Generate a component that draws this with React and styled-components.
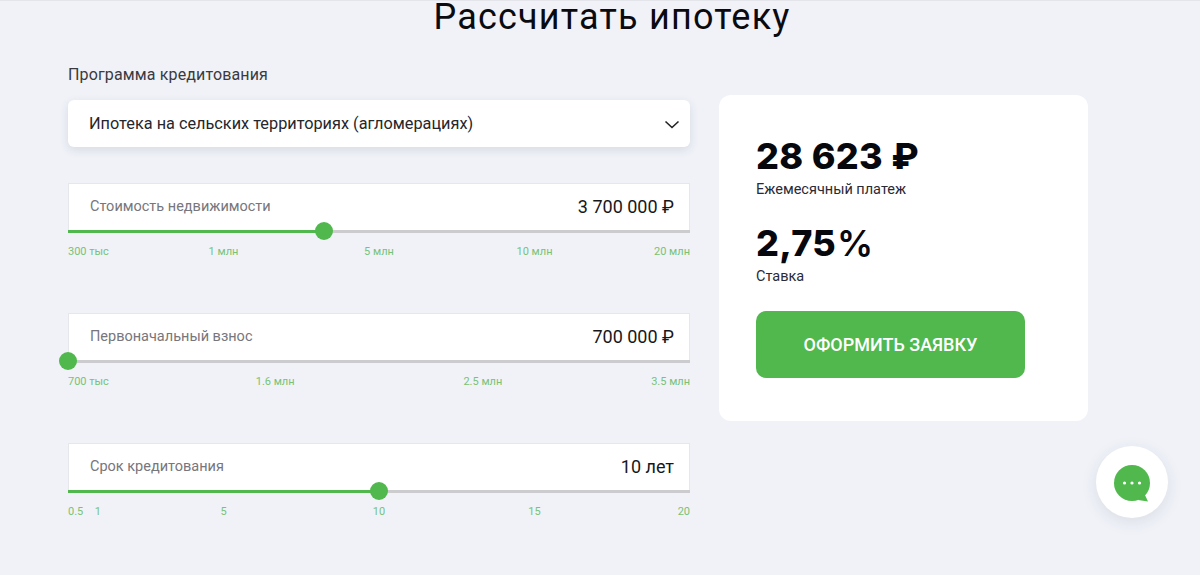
import React from 'react'
import styled, { createGlobalStyle } from 'styled-components'

const GlobalStyle = createGlobalStyle`
  html, body { margin: 0; padding: 0; height: 100%; overflow: hidden; }
  body { background: #f0f2f8; font-family: Roboto, "Noto Sans", sans-serif; }
`

const GREEN = '#50b84c'

const Page = styled.div`
  height: 575px;
  box-sizing: border-box;
  border-top: 1px solid #e3e5ea;
  position: relative;
`
const Title = styled.h1`
  margin: 0;
  height: 66px;
  padding-left: 24px;
  font: 400 36px/32px Roboto, sans-serif;
  letter-spacing: 1.2px;
  text-align: center;
  color: #0b0b0f;
`
const Columns = styled.div`
  display: flex;
  align-items: flex-start;
  gap: 29px;
  padding-left: 68px;
`
const LeftCol = styled.div`
  width: 622px;
`
const ProgramLabel = styled.div`
  font-size: 16px;
  line-height: 16px;
  letter-spacing: 0.14px;
  color: #3a3a40;
  margin-bottom: 17px;
`
const Select = styled.div`
  height: 47px;
  display: flex;
  align-items: center;
  justify-content: space-between;
  padding: 0 9px 0 21px;
  background: #fff;
  border-radius: 6px;
  box-shadow: 0 3px 10px rgba(40, 50, 80, 0.12);
  font-size: 16.3px;
  color: #26262b;
  margin-bottom: 36px;
`
const Field = styled.div`
  height: 130px;
`
const InputBox = styled.div`
  height: 47px;
  box-sizing: border-box;
  display: flex;
  align-items: center;
  justify-content: space-between;
  padding: 0 15px 1px 21px;
  background: #fff;
  border: 1px solid #e6e7ec;
  border-bottom: none;
`
const FieldLabel = styled.span`
  font-size: 14.5px;
  color: #77767c;
`
const FieldValue = styled.span`
  font-size: 18px;
  color: #17171b;
`
const Track = styled.div`
  position: relative;
  height: 3px;
  background: #cccccf;
`
const Fill = styled.div`
  height: 100%;
  background: ${GREEN};
`
const Thumb = styled.div`
  position: absolute;
  top: -8px;
  width: 18px;
  height: 18px;
  margin-left: -9px;
  border-radius: 50%;
  background: ${GREEN};
`
const Scale = styled.div`
  position: relative;
  height: 14px;
  margin-top: 12px;
`
const Tick = styled.span`
  position: absolute;
  left: ${p => p.$at}%;
  transform: translateX(${p => (p.$at === 0 ? '0' : p.$at === 100 ? '-100%' : '-50%')});
  font-size: 11px;
  line-height: 14px;
  color: #78c276;
  white-space: nowrap;
`
const Card = styled.div`
  width: 369px;
  height: 326px;
  box-sizing: border-box;
  margin-top: 28px;
  padding: 38px 37px;
  background: #fff;
  border-radius: 12px;
`
const Amount = styled.div`
  font: 800 36px/46px Inter, sans-serif;
  letter-spacing: 0.3px;
  color: #07070e;
`
const Percent = styled.span`
  font-weight: 600;
  margin-left: 1px;
`
const Caption = styled.div`
  font-size: 14.5px;
  line-height: 20px;
  color: #2a2a36;
  margin: 1px 0 20px;
`
const Apply = styled.button`
  display: block;
  width: 269px;
  height: 67px;
  margin-top: 24px;
  border: none;
  border-radius: 10px;
  background: ${GREEN};
  color: #fff;
  font: 500 18px Roboto, sans-serif;
`
const ChatButton = styled.div`
  position: absolute;
  left: 1096px;
  top: 445px;
  width: 72px;
  height: 72px;
  display: flex;
  align-items: center;
  justify-content: center;
  border-radius: 50%;
  background: #fff;
  box-shadow: 0 4px 16px rgba(40, 50, 80, 0.1);
`

const Chevron = () => (
  <svg width="18" height="18" viewBox="0 0 18 18" fill="none">
    <path d="M2.5 6.5 9 12.500l6.500-6" stroke="#222" strokeWidth="1.6" />
  </svg>
)

const ChatIcon = () => (
  <svg width="38" height="40" viewBox="0 0 38 40">
    <circle cx="19" cy="21" r="18" fill={GREEN} />
    <path d="M31 31l4 8.500-10-1.500z" fill={GREEN} />
    <circle cx="11.500" cy="21" r="1.600" fill="#fff" />
    <circle cx="19" cy="21" r="1.600" fill="#fff" />
    <circle cx="26.500" cy="21" r="1.600" fill="#fff" />
  </svg>
)

const sliders = [
  {
    label: 'Стоимость недвижимости',
    value: '3 700 000 ₽',
    percent: 41.2,
    ticks: [[0, '300 тыс'], [25, '1 млн'], [50, '5 млн'], [75, '10 млн'], [100, '20 млн']],
  },
  {
    label: 'Первоначальный взнос',
    value: '700 000 ₽',
    percent: 0,
    ticks: [[0, '700 тыс'], [33.3, '1.6 млн'], [66.7, '2.5 млн'], [100, '3.5 млн']],
  },
  {
    label: 'Срок кредитования',
    value: '10 лет',
    percent: 50,
    ticks: [[0, '0.5'], [4.8, '1'], [25, '5'], [50, '10'], [75, '15'], [100, '20']],
  },
]

const App = () => {
  return (
    <Page>
      <GlobalStyle />
      <Title>Рассчитать ипотеку</Title>
      <Columns>
        <LeftCol>
          <ProgramLabel>Программа кредитования</ProgramLabel>
          <Select>
            Ипотека на сельских территориях (агломерациях)
            <Chevron />
          </Select>
          {sliders.map(s => (
            <Field key={s.label}>
              <InputBox>
                <FieldLabel>{s.label}</FieldLabel>
                <FieldValue>{s.value}</FieldValue>
              </InputBox>
              <Track>
                <Fill style={{ width: `${s.percent}%` }} />
                <Thumb style={{ left: `${s.percent}%` }} />
              </Track>
              <Scale>
                {s.ticks.map(([at, text]) => (
                  <Tick key={text} $at={at}>{text}</Tick>
                ))}
              </Scale>
            </Field>
          ))}
        </LeftCol>
        <Card>
          <Amount>28 623 ₽</Amount>
          <Caption>Ежемесячный платеж</Caption>
          <Amount>2,75<Percent>%</Percent></Amount>
          <Caption>Ставка</Caption>
          <Apply>ОФОРМИТЬ ЗАЯВКУ</Apply>
        </Card>
      </Columns>
      <ChatButton>
        <ChatIcon />
      </ChatButton>
    </Page>
  )
}

export default App
